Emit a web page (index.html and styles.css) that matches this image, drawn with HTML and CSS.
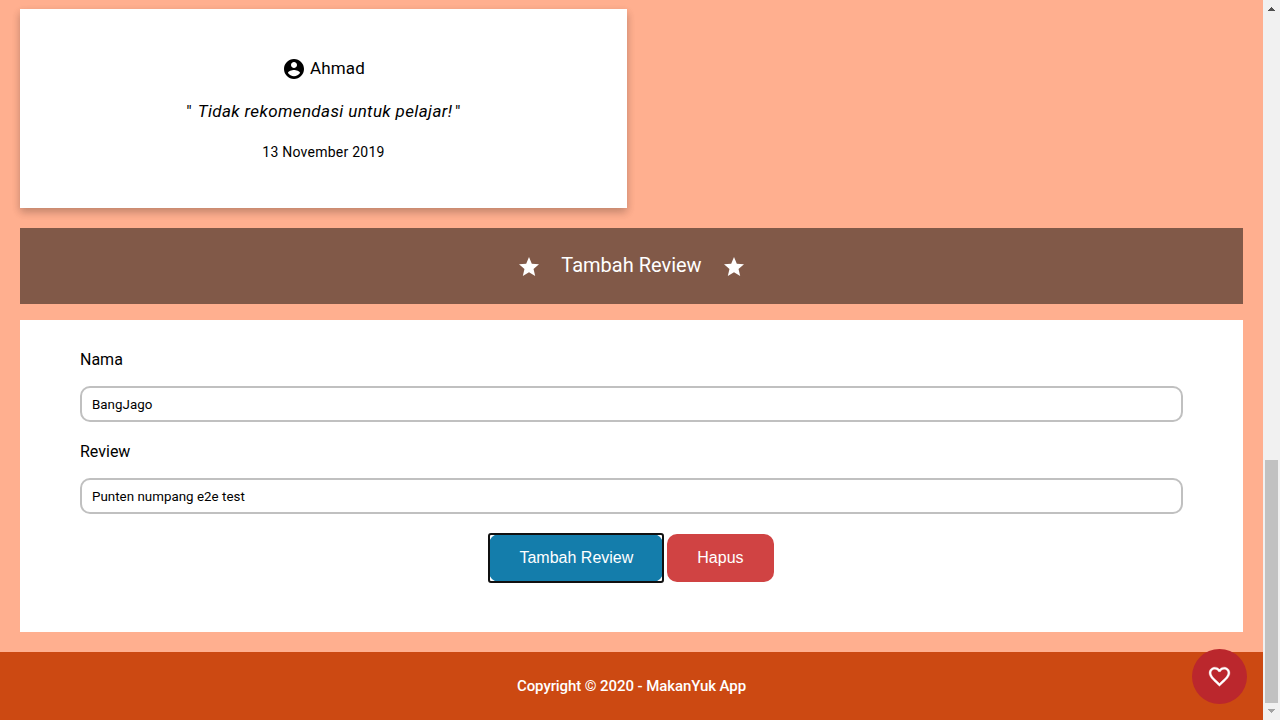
FILE: index.html
```html
<!DOCTYPE html>
<html lang="id">
<head>
<meta charset="utf-8">
<title>MakanYuk App</title>
<link rel="stylesheet" href="styles.css">
</head>
<body>
<div class="page">
  <main class="content">
    <article class="review-card">
      <p class="reviewer"><svg class="avatar" viewBox="0 0 24 24"><path d="M12 2C6.48 2 2 6.48 2 12s4.480 10 10 10 10-4.480 10-10S17.520 2 12 2zm0 3c1.660 0 3 1.340 3 3s-1.340 3-3 3-3-1.340-3-3 1.340-3 3-3zm0 14.200c-2.500 0-4.710-1.280-6-3.220.030-1.990 4-3.080 6-3.080 1.990 0 5.970 1.090 6 3.080-1.290 1.940-3.500 3.220-6 3.220z"/></svg><span class="reviewer-name">Ahmad</span></p>
      <p class="quote">" <em class="quote-text">Tidak rekomendasi untuk pelajar!</em> "</p>
      <p class="date">13 November 2019</p>
    </article>
    <header class="banner">
      <svg class="star" viewBox="0 0 24 24"><path d="M12 17.270L18.180 21l-1.640-7.030L22 9.240l-7.190-.610L12 2 9.190 8.630 2 9.240l5.460 4.730L5.820 21z"/></svg>
      <h2 class="banner-title">Tambah Review</h2>
      <svg class="star" viewBox="0 0 24 24"><path d="M12 17.270L18.180 21l-1.640-7.030L22 9.240l-7.190-.610L12 2 9.190 8.630 2 9.240l5.460 4.730L5.820 21z"/></svg>
    </header>
    <form class="review-form">
      <label class="label" for="name">Nama</label>
      <input class="field" id="name" type="text" value="BangJago">
      <label class="label" for="review">Review</label>
      <input class="field" id="review" type="text" value="Punten numpang e2e test">
      <div class="actions">
        <button class="btn btn-submit" type="button">Tambah Review</button>
        <button class="btn btn-reset" type="button">Hapus</button>
      </div>
    </form>
  </main>
  <footer class="footer">Copyright © 2020 - MakanYuk App</footer>
</div>
<div class="scrollbar">
  <svg class="arrow arrow-up" viewBox="0 0 7 4" shape-rendering="crispEdges"><path d="M3 0h1v1h1v1h1v1h1v1H0V3h1V2h1V1h1z"/></svg>
  <div class="thumb"></div>
  <svg class="arrow arrow-down" viewBox="0 0 7 4" shape-rendering="crispEdges"><path d="M0 0h7v1H6v1H5v1H4v1H3V3H2V2H1V1H0z"/></svg>
</div>
<button class="like" type="button" aria-label="Suka"><svg class="heart" viewBox="0 0 24 24"><path d="M16.500 3c-1.740 0-3.410.810-4.500 2.090C10.910 3.810 9.240 3 7.500 3 4.420 3 2 5.420 2 8.500c0 3.780 3.400 6.860 8.550 11.540L12 21.350l1.450-1.320C18.600 15.360 22 12.280 22 8.500 22 5.420 19.580 3 16.500 3zm-4.400 15.550l-.100.100-.100-.100C7.140 14.240 4 11.390 4 8.500 4 6.500 5.500 5 7.500 5c1.540 0 3.040.990 3.570 2.360h1.870C13.460 5.990 14.960 5 16.500 5c2 0 3.500 1.500 3.500 3.500 0 2.890-3.140 5.740-7.900 10.050z"/></svg></button>
</body>
</html>
```

FILE: styles.css
```css
* {
  box-sizing: border-box;
}

body {
  margin: 0;
  display: flex;
  height: 720px;
  overflow: hidden;
  background: #ffaf8f;
  color: #000;
  font-family: Roboto, sans-serif;
}

.page {
  flex: 1;
  display: flex;
  flex-direction: column;
}

.content {
  flex: 1;
  padding: 9px 20px 20px;
}

.review-card {
  width: 607px;
  height: 199px;
  padding-top: 46px;
  background: #fff;
  box-shadow: 0 4px 8px rgba(0, 0, 0, 0.2), 0 4px 10px rgba(0, 0, 0, 0.06);
  text-align: center;
}

.reviewer {
  display: flex;
  justify-content: center;
  align-items: center;
  gap: 4px;
  margin: 0;
  height: 27px;
  font-size: 17px;
  letter-spacing: 0.2px;
}

.reviewer-name {
  padding-bottom: 2px;
}

.avatar {
  width: 24px;
  height: 24px;
}

.quote {
  margin: 16px 0 0;
  font-size: 17px;
  line-height: 26px;
  letter-spacing: 0.37px;
}

.quote-text {
  margin: 0 -2px 0 1px;
}

.date {
  margin: 17px 0 0;
  font-size: 14px;
  line-height: 22px;
  letter-spacing: 0.25px;
}

.banner {
  display: flex;
  justify-content: center;
  align-items: center;
  gap: 20px;
  height: 76px;
  margin-top: 20px;
  padding-bottom: 2px;
  background: #815948;
  color: #fff;
}

.star {
  width: 24px;
  height: 24px;
  fill: #fff;
  margin-top: 3px;
}

.banner-title {
  margin: 0;
  font-size: 20px;
  font-weight: 400;
  line-height: 30px;
}

.review-form {
  height: 312px;
  margin-top: 16px;
  padding: 28px 60px 0;
  background: #fff;
}

.label {
  display: block;
  font-size: 16px;
  line-height: 24px;
}

.field {
  display: block;
  width: 100%;
  height: 36px;
  margin: 14px 0 18px;
  padding: 0 10px;
  border: 2px solid #c0c0c0;
  border-radius: 10px;
  background: #fff;
  color: #000;
  font: 13.333px Roboto, sans-serif;
  letter-spacing: 0.03px;
}

.actions {
  display: flex;
  justify-content: center;
  gap: 4px;
  margin-top: 20px;
}

.btn {
  height: 48px;
  padding: 0 30px;
  border: 0;
  border-radius: 10px;
  color: #fff;
  font: 16px "Liberation Sans", Arial, sans-serif;
}

.btn-submit {
  position: relative;
  background: #147dab;
}

.btn-submit::after {
  content: "";
  position: absolute;
  inset: -1px;
  border: 2px solid #101010;
  border-radius: 3px;
}

.btn-reset {
  background: #d04343;
}

.footer {
  height: 68px;
  background: #cc4912;
  color: #fff;
  font-size: 15px;
  font-weight: 500;
  letter-spacing: -0.09px;
  line-height: 68px;
  text-align: center;
}

.scrollbar {
  display: flex;
  flex-direction: column;
  align-items: center;
  width: 17px;
  padding: 7px 0;
  background: #f1f1f1;
}

.arrow {
  width: 7px;
  height: 4px;
}

.arrow-up {
  fill: #505050;
}

.arrow-down {
  margin-top: 6px;
  fill: #a3a3a3;
}

.thumb {
  width: 13px;
  height: 243px;
  margin-top: 449px;
  background: #c1c1c1;
}

.like {
  position: fixed;
  left: 1192px;
  top: 649px;
  display: flex;
  justify-content: center;
  align-items: center;
  width: 55px;
  height: 55px;
  padding: 0;
  border: 0;
  border-radius: 50%;
  background: #bb272d;
}

.heart {
  width: 25px;
  height: 25px;
  fill: #fff;
  stroke: #fff;
  stroke-width: 0.3;
}
```
